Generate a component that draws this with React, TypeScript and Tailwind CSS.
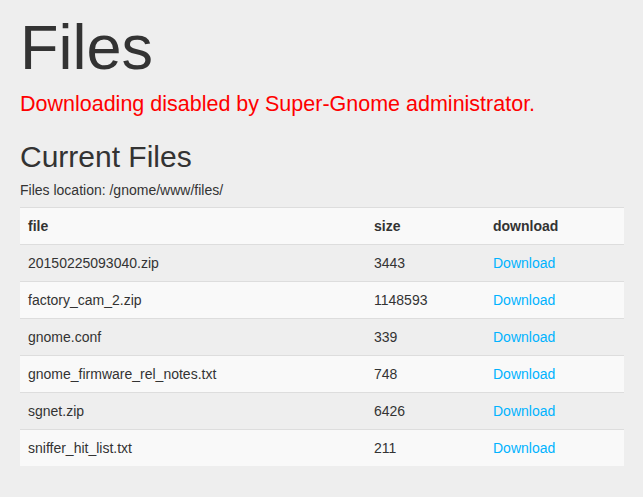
const files = [
  { name: "20150225093040.zip", size: "3443" },
  { name: "factory_cam_2.zip", size: "1148593" },
  { name: "gnome.conf", size: "339" },
  { name: "gnome_firmware_rel_notes.txt", size: "748" },
  { name: "sgnet.zip", size: "6426" },
  { name: "sniffer_hit_list.txt", size: "211" },
];

export default function App() {
  return (
    <div className="min-h-[497px] bg-[#eeeeee] px-[20px] pb-8 font-['Liberation_Sans',Arial,sans-serif] text-[#333333]">
      <h1 className="pt-[13px] text-[63px] leading-[1.1]">Files</h1>
      <p className="mt-[8px] text-[21.5px] leading-[29px] text-[#ff0000]">
        Downloading disabled by Super-Gnome administrator.
      </p>
      <h2 className="mt-[21px] text-[30px] leading-[1.1]">Current Files</h2>
      <p className="mt-[7px] text-[14px] leading-[20px]">Files location: /gnome/www/files/</p>
      <table className="mt-[7px] w-[604px] border-collapse text-[14px] leading-[20px]">
        <thead>
          <tr className="bg-[#f9f9f9]">
            <th className="w-[346px] border-y border-[#dddddd] p-[8px] text-left font-bold">file</th>
            <th className="w-[119px] border-y border-[#dddddd] p-[8px] text-left font-bold">size</th>
            <th className="border-y border-[#dddddd] p-[8px] text-left font-bold">download</th>
          </tr>
        </thead>
        <tbody>
          {files.map((f, i) => (
            <tr key={f.name} className={i % 2 === 0 ? "bg-[#eeeeee]" : "bg-[#f9f9f9]"}>
              <td className="border-t border-[#dddddd] p-[8px]">{f.name}</td>
              <td className="border-t border-[#dddddd] p-[8px]">{f.size}</td>
              <td className="border-t border-[#dddddd] p-[8px]">
                <a href="#" className="text-[#00b3ff]">Download</a>
              </td>
            </tr>
          ))}
        </tbody>
      </table>
    </div>
  );
}
